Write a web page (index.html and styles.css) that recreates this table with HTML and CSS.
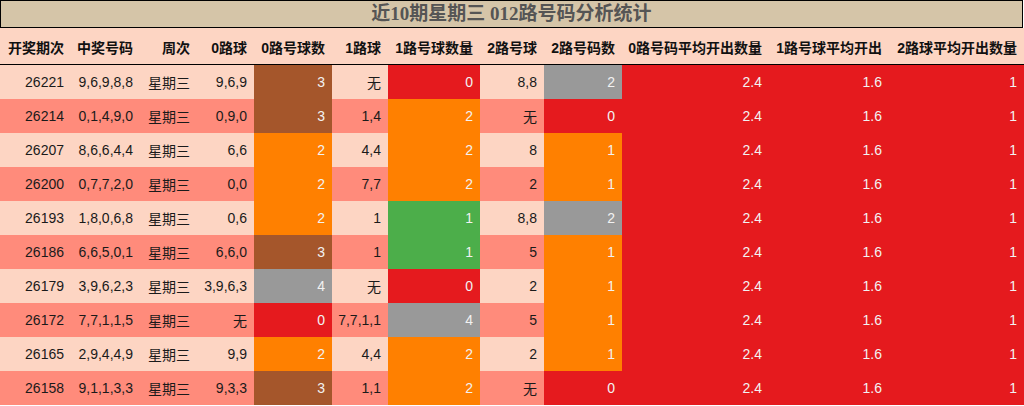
FILE: index.html
```html
<!DOCTYPE html>
<html lang="zh">
<head>
<meta charset="utf-8">
<title>近10期星期三 012路号码分析统计</title>
<link rel="stylesheet" href="styles.css">
</head>
<body>
<div class="title">近10期星期三 012路号码分析统计</div>
<table class="stats">
<colgroup>
<col class="w71"><col class="w69"><col class="w57"><col class="w57"><col class="w78"><col class="w56"><col class="w92"><col class="w64"><col class="w78"><col class="w147"><col class="w120"><col class="w135">
</colgroup>
<thead>
<tr><th>开奖期次</th><th>中奖号码</th><th>周次</th><th>0路球</th><th>0路号球数</th><th>1路球</th><th>1路号球数量</th><th>2路号球</th><th>2路号码数</th><th>0路号码平均开出数量</th><th>1路号球平均开出</th><th>2路球平均开出数量</th></tr>
</thead>
<tbody>
<tr class="odd"><td>26221</td><td>9,6,9,8,8</td><td>星期三</td><td>9,6,9</td><td class="c brown">3</td><td>无</td><td class="c red">0</td><td>8,8</td><td class="c gray">2</td><td class="c red">2.4</td><td class="c red">1.6</td><td class="c red">1</td></tr>
<tr class="even"><td>26214</td><td>0,1,4,9,0</td><td>星期三</td><td>0,9,0</td><td class="c brown">3</td><td>1,4</td><td class="c orange">2</td><td>无</td><td class="c red">0</td><td class="c red">2.4</td><td class="c red">1.6</td><td class="c red">1</td></tr>
<tr class="odd"><td>26207</td><td>8,6,6,4,4</td><td>星期三</td><td>6,6</td><td class="c orange">2</td><td>4,4</td><td class="c orange">2</td><td>8</td><td class="c orange">1</td><td class="c red">2.4</td><td class="c red">1.6</td><td class="c red">1</td></tr>
<tr class="even"><td>26200</td><td>0,7,7,2,0</td><td>星期三</td><td>0,0</td><td class="c orange">2</td><td>7,7</td><td class="c orange">2</td><td>2</td><td class="c orange">1</td><td class="c red">2.4</td><td class="c red">1.6</td><td class="c red">1</td></tr>
<tr class="odd"><td>26193</td><td>1,8,0,6,8</td><td>星期三</td><td>0,6</td><td class="c orange">2</td><td>1</td><td class="c green">1</td><td>8,8</td><td class="c gray">2</td><td class="c red">2.4</td><td class="c red">1.6</td><td class="c red">1</td></tr>
<tr class="even"><td>26186</td><td>6,6,5,0,1</td><td>星期三</td><td>6,6,0</td><td class="c brown">3</td><td>1</td><td class="c green">1</td><td>5</td><td class="c orange">1</td><td class="c red">2.4</td><td class="c red">1.6</td><td class="c red">1</td></tr>
<tr class="odd"><td>26179</td><td>3,9,6,2,3</td><td>星期三</td><td>3,9,6,3</td><td class="c gray">4</td><td>无</td><td class="c red">0</td><td>2</td><td class="c orange">1</td><td class="c red">2.4</td><td class="c red">1.6</td><td class="c red">1</td></tr>
<tr class="even"><td>26172</td><td>7,7,1,1,5</td><td>星期三</td><td>无</td><td class="c red">0</td><td>7,7,1,1</td><td class="c gray">4</td><td>5</td><td class="c orange">1</td><td class="c red">2.4</td><td class="c red">1.6</td><td class="c red">1</td></tr>
<tr class="odd"><td>26165</td><td>2,9,4,4,9</td><td>星期三</td><td>9,9</td><td class="c orange">2</td><td>4,4</td><td class="c orange">2</td><td>2</td><td class="c orange">1</td><td class="c red">2.4</td><td class="c red">1.6</td><td class="c red">1</td></tr>
<tr class="even"><td>26158</td><td>9,1,1,3,3</td><td>星期三</td><td>9,3,3</td><td class="c brown">3</td><td>1,1</td><td class="c orange">2</td><td>无</td><td class="c red">0</td><td class="c red">2.4</td><td class="c red">1.6</td><td class="c red">1</td></tr>
</tbody>
</table>
</body>
</html>
```
FILE: styles.css
```css
html, body {
  margin: 0;
  padding: 0;
  background: #ffffff;
}
body {
  width: 1024px;
}
.title {
  box-sizing: border-box;
  width: 1023px;
  height: 28px;
  border: 1px solid #000;
  background: #d5c5a8;
  color: #555555;
  font-family: "Liberation Serif", "Noto Sans CJK SC", serif;
  font-weight: bold;
  font-size: 19px;
  line-height: 26px;
  text-align: center;
}
.stats {
  width: 1024px;
  table-layout: fixed;
  border-collapse: collapse;
  border-spacing: 0;
  font-family: "Liberation Sans", "Noto Sans CJK SC", sans-serif;
  font-size: 14px;
}
.w71 { width: 71px; }
.w69 { width: 69px; }
.w57 { width: 57px; }
.w78 { width: 78px; }
.w56 { width: 56px; }
.w92 { width: 92px; }
.w64 { width: 64px; }
.w147 { width: 147px; }
.w120 { width: 120px; }
.w135 { width: 135px; }
.stats th, .stats td {
  padding: 0 7px 0 0;
  text-align: right;
  vertical-align: middle;
  white-space: nowrap;
  overflow: hidden;
}
.stats thead tr {
  background: #fdd5c3;
}
.stats th {
  height: 35px;
  font-weight: bold;
  color: #111;
  border-bottom: 1px solid #000;
  padding-top: 1px;
}
.stats td {
  height: 34px;
  color: #1a1a1a;
}
.stats tr.odd { background: #fdd5c3; }
.stats tr.even { background: #ff8b7b; }
.stats td.c { color: #f2f2f2; }
.stats td.brown { background: #a5562b; }
.stats td.orange { background: #ff8000; }
.stats td.red { background: #e51a1e; }
.stats td.gray { background: #999999; }
.stats td.green { background: #4cae4a; }
```
